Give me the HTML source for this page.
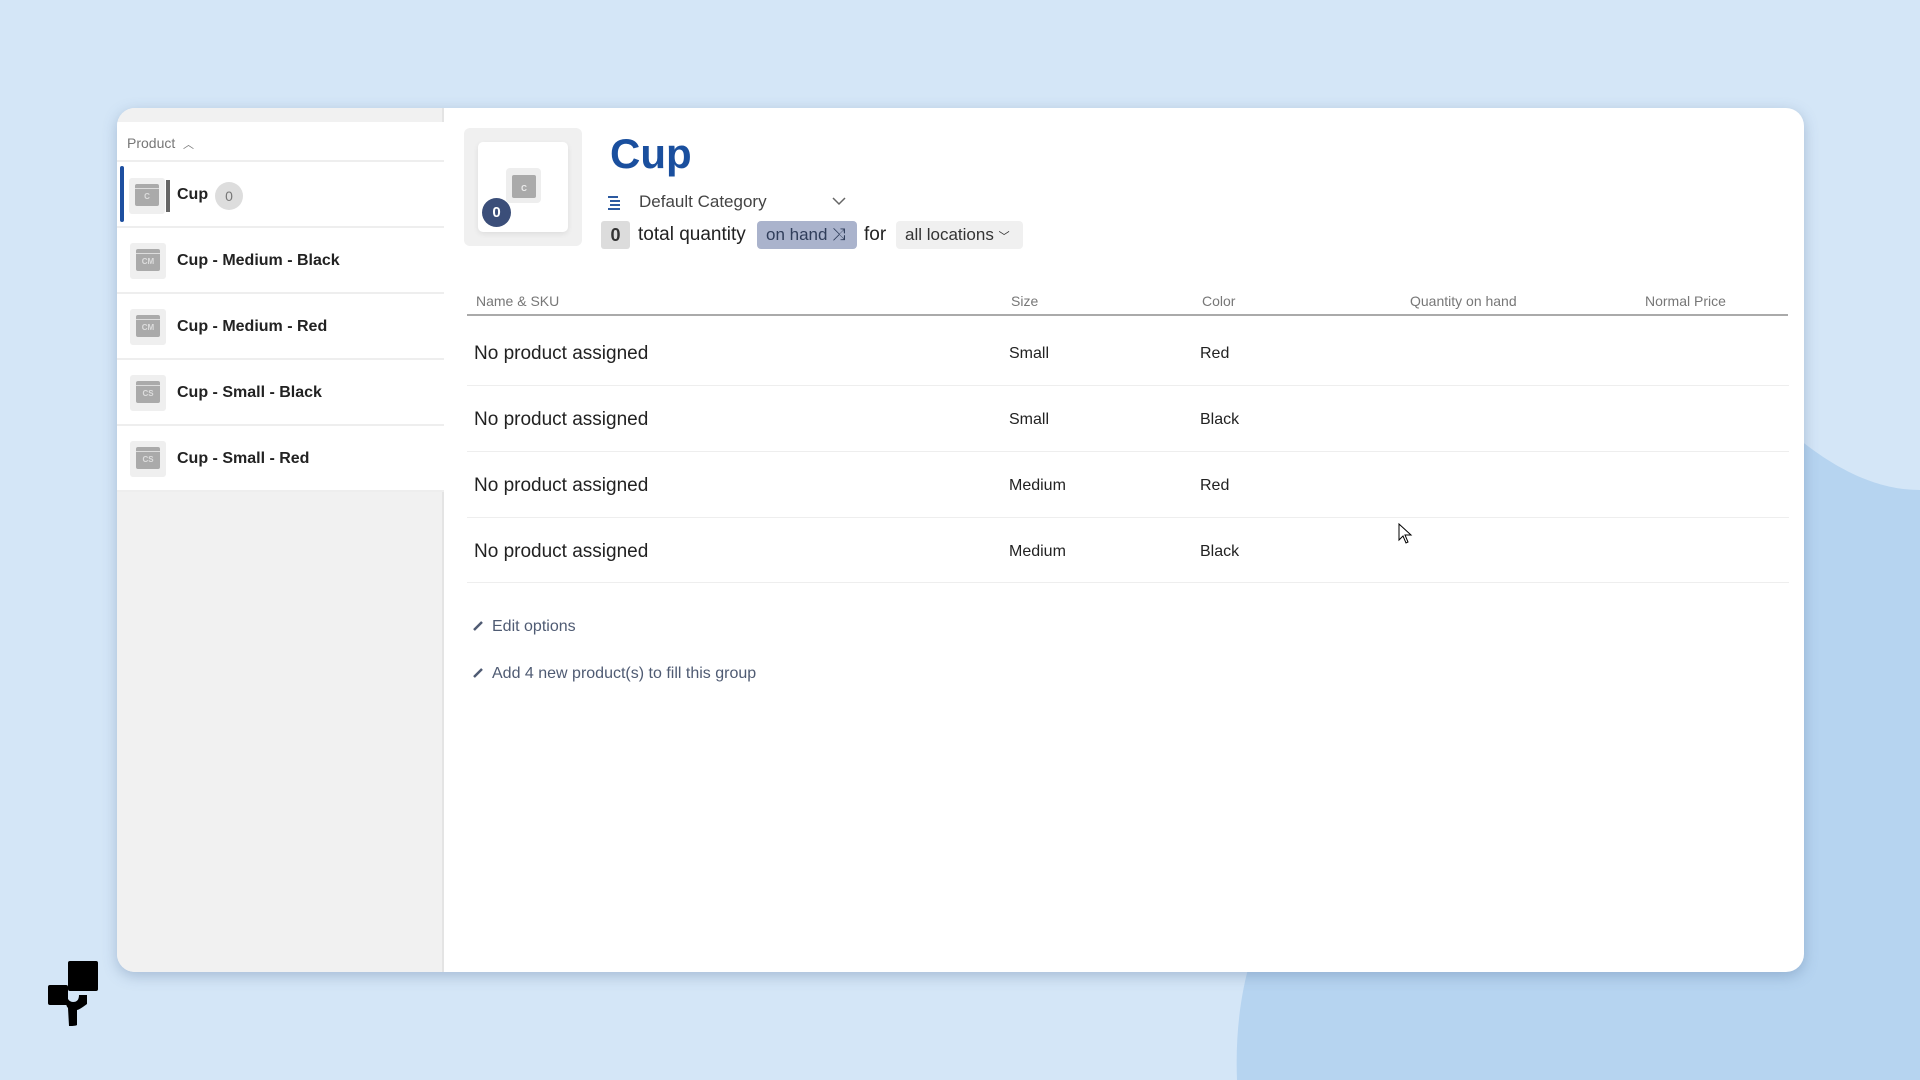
<!DOCTYPE html>
<html><head><meta charset="utf-8"><style>
*{margin:0;padding:0;box-sizing:border-box}
body{width:1920px;height:1080px;background:#d4e6f7;position:relative;overflow:hidden;font-family:"Liberation Sans",sans-serif;color:#222}
.abs{position:absolute}
.panel{left:117px;top:108px;width:1687px;height:864px;background:#fff;border-radius:18px;box-shadow:0 4px 14px rgba(80,110,150,.35);overflow:hidden}
.side{left:0;top:0;width:327px;height:864px;background:#f1f1f1;border-right:2px solid #e4e4e4}
.sidehead{left:0;top:14px;width:327px;height:40px;background:#fff;border-bottom:2px solid #eee;font-size:14px;color:#777;padding:13px 10px}
.row{left:0;width:327px;height:66px;background:#fff;border-bottom:2px solid #eee}
.row .ic{position:absolute;left:13px;top:15px;width:36px;height:36px;background:#efefef;border-radius:3px}
.row .ic i{position:absolute;left:6px;top:6px;width:24px;height:22px;background:#aaa;border-radius:2px;font-style:normal;color:#ddd;font-size:8px;font-weight:bold;text-align:center;line-height:26px}
.row .ic i:before{content:"";position:absolute;left:0;top:4px;width:24px;height:1px;background:#ddd}
.row b{position:absolute;left:60px;top:24px;font-size:16px;color:#222}
.hdr{font-size:14px;color:#777;top:293px}
.cell{font-size:16px;color:#222}
.name{font-size:19px;color:#222}
.sep{left:467px;width:1322px;height:1px;background:#eee}
.link{font-size:16px;color:#4f5b73}
</style></head><body>
<svg class="abs" style="left:0;top:0" width="1920" height="1080"><path d="M1237 1080 C1230 900 1330 770 1560 700 C1720 650 1770 560 1800 440 C1850 480 1890 490 1920 490 L1920 1080 Z" fill="#b6d4f0"/></svg>
<div class="abs panel">
 <div class="abs" style="left:0;top:0;width:327px;height:14px;background:#ececec"></div>
 <div class="abs side"></div>
 <div class="abs sidehead">Product &nbsp;<span style="font-size:11px">︿</span></div>
 <div class="abs row" style="top:54px;height:66px"><div class="abs" style="left:3px;top:4px;width:4px;height:56px;background:#1d4fa0;border-radius:2px"></div><div class="ic" style="left:12px;top:16px"><i>C</i></div><div class="abs" style="left:49px;top:18px;width:4px;height:32px;background:#666"></div><b style="top:24px">Cup</b><div class="abs" style="left:98px;top:20px;width:28px;height:28px;border-radius:50%;background:#ddd;color:#777;font-size:14px;text-align:center;line-height:28px">0</div></div>
 <div class="abs row" style="top:120px"><div class="ic"><i>CM</i></div><b>Cup - Medium - Black</b></div>
 <div class="abs row" style="top:186px"><div class="ic"><i>CM</i></div><b>Cup - Medium - Red</b></div>
 <div class="abs row" style="top:252px"><div class="ic"><i>CS</i></div><b>Cup - Small - Black</b></div>
 <div class="abs row" style="top:318px"><div class="ic"><i>CS</i></div><b>Cup - Small - Red</b></div>
</div>
<!-- thumb -->
<div class="abs" style="left:464px;top:128px;width:118px;height:118px;background:#f0f0f0;border-radius:6px"></div>
<div class="abs" style="left:478px;top:142px;width:90px;height:90px;background:#fff;border-radius:5px;box-shadow:0 2px 6px rgba(0,0,0,.08)"></div>
<div class="abs" style="left:506px;top:168px;width:35px;height:35px;background:#eee;border-radius:4px"></div>
<div class="abs" style="left:512px;top:175px;width:24px;height:23px;background:#aaa;border-radius:2px;color:#eee;font-size:8px;font-weight:bold;text-align:center;line-height:27px">C</div>
<div class="abs" style="left:482px;top:198px;width:29px;height:29px;border-radius:50%;background:#3b4e79;color:#fff;font-weight:bold;font-size:15px;text-align:center;line-height:29px">0</div>
<div class="abs" style="left:610px;top:130px;font-size:42px;font-weight:bold;color:#1a4f9e">Cup</div>
<div class="abs" style="left:608px;top:195px;width:14px;height:14px"><div style="height:2px;background:#2c5aa0;margin:1px 0 2px 0;width:10px"></div><div style="height:2px;background:#2c5aa0;margin-bottom:2px;margin-left:2px;width:10px"></div><div style="height:2px;background:#2c5aa0;margin-bottom:2px;margin-left:2px;width:10px"></div><div style="height:2px;background:#2c5aa0;width:12px"></div></div>
<div class="abs" style="left:639px;top:192px;font-size:17px;color:#444">Default Category</div>
<svg class="abs" style="left:832px;top:196px" width="14" height="10"><path d="M1 2 L7 8 L13 2" stroke="#666" stroke-width="1.5" fill="none"/></svg>
<div class="abs" style="left:601px;top:221px;width:29px;height:28px;background:#dcdcdc;border-radius:3px;font-size:18px;font-weight:bold;color:#333;text-align:center;line-height:28px">0</div>
<div class="abs" style="left:638px;top:224px;font-size:19px;color:#222">total quantity</div>
<div class="abs" style="left:757px;top:221px;width:100px;height:28px;background:#aab3cc;border-radius:4px;font-size:17px;color:#2f3d5a;line-height:28px;padding-left:9px">on hand ⤨</div>
<div class="abs" style="left:864px;top:224px;font-size:19px;color:#222">for</div>
<div class="abs" style="left:896px;top:221px;width:127px;height:28px;background:#f0f0f0;border-radius:4px;font-size:17px;color:#333;line-height:28px;padding-left:9px">all locations <span style="font-size:11px">﹀</span></div>
<!-- table -->
<div class="abs hdr" style="left:476px">Name &amp; SKU</div>
<div class="abs hdr" style="left:1011px">Size</div>
<div class="abs hdr" style="left:1202px">Color</div>
<div class="abs hdr" style="left:1410px">Quantity on hand</div>
<div class="abs hdr" style="left:1645px">Normal Price</div>
<div class="abs" style="left:467px;top:314px;width:1321px;height:2px;background:#aaa"></div>
<div class="abs name" style="left:474px;top:343px">No product assigned</div><div class="abs cell" style="left:1009px;top:345px">Small</div><div class="abs cell" style="left:1200px;top:345px">Red</div>
<div class="abs sep" style="top:385px"></div>
<div class="abs name" style="left:474px;top:409px">No product assigned</div><div class="abs cell" style="left:1009px;top:411px">Small</div><div class="abs cell" style="left:1200px;top:411px">Black</div>
<div class="abs sep" style="top:451px"></div>
<div class="abs name" style="left:474px;top:475px">No product assigned</div><div class="abs cell" style="left:1009px;top:477px">Medium</div><div class="abs cell" style="left:1200px;top:477px">Red</div>
<div class="abs sep" style="top:517px"></div>
<div class="abs name" style="left:474px;top:541px">No product assigned</div><div class="abs cell" style="left:1009px;top:543px">Medium</div><div class="abs cell" style="left:1200px;top:543px">Black</div>
<div class="abs sep" style="top:582px"></div>
<svg class="abs" style="left:472px;top:620px" width="12" height="12"><path d="M2 10 L10 2" stroke="#4f5b73" stroke-width="2.5"/></svg>
<div class="abs link" style="left:492px;top:618px">Edit options</div>
<svg class="abs" style="left:472px;top:667px" width="12" height="12"><path d="M2 10 L10 2" stroke="#4f5b73" stroke-width="2.5"/></svg>
<div class="abs link" style="left:492px;top:665px">Add 4 new product(s) to fill this group</div>
<!-- cursor -->
<svg class="abs" style="left:1398px;top:523px" width="16" height="22"><path d="M1 1 L1 17 L5 13 L8 20 L10 19 L7 12 L13 12 Z" fill="#fff" stroke="#000" stroke-width="1"/></svg>
<!-- logo -->
<svg class="abs" style="left:46px;top:958px" width="56" height="70"><rect x="22" y="3" width="30" height="30" rx="2" fill="#000"/><rect x="2" y="27" width="20" height="20" rx="2" fill="#000"/><path d="M20 30 Q20 44 27 44 Q33 44 33 37 L41 37 L41 46 Q33 52 31 52 L31 67 Q30 68 23 68 L22 50 Q18 46 20 30Z" fill="#000"/></svg>
</body></html>
